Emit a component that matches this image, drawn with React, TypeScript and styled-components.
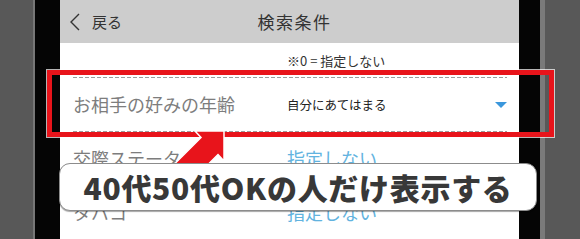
import styled, { createGlobalStyle } from "styled-components";

const GlobalStyle = createGlobalStyle`
  html, body {
    margin: 0;
    padding: 0;
    background: #585858;
  }
  body {
    font-family: "Noto Sans CJK JP", "Noto Sans", sans-serif;
  }
`;

const Stage = styled.div`
  position: relative;
  width: 580px;
  height: 239px;
  overflow: hidden;
  display: flex;
  background: #585858;
`;

const Bezel = styled.div`
  display: flex;
  margin-left: 33px;
  padding: 0 21px 0 25px;
  background: #050505;
  border-left: 2px solid #777;
  border-right: 5px solid #7a7a7a;
`;

const Screen = styled.div`
  width: 459px;
  display: flex;
  flex-direction: column;
  background: #fff;
`;

const Header = styled.header`
  height: 43px;
  flex-shrink: 0;
  display: grid;
  grid-template-columns: 1fr auto 1fr;
  align-items: center;
  padding: 0 9px;
  background: #cdcdcd;
  color: #333;
`;

const Back = styled.div`
  display: flex;
  align-items: center;
  gap: 12px;
  font-size: 15px;
`;

const Title = styled.div`
  font-size: 17px;
  letter-spacing: 1.5px;
  padding-left: 10px;
`;

const Note = styled.div`
  height: 34px;
  flex-shrink: 0;
  display: flex;
  align-items: center;
  padding-left: 227px;
  font-size: 13px;
  color: #333;
  white-space: pre;
`;

const List = styled.div`
  margin: 0 12px 0 13px;
`;

const Row = styled.div`
  box-sizing: border-box;
  height: 54px;
  display: grid;
  grid-template-columns: 214px 1fr auto;
  align-items: center;
  background: linear-gradient(to right, #9c9c9c 66%, transparent 0) top left / 6px 1px repeat-x;
  &:last-child {
    height: 53px;
  }
`;

const Label = styled.span`
  font-size: 18px;
  color: #7d7d7d;
`;

const Value = styled.span<{ $link?: boolean }>`
  font-size: ${(p) => (p.$link ? "18px" : "12.5px")};
  color: ${(p) => (p.$link ? "#62b3df" : "#222")};
`;

const Caret = styled.span`
  width: 0;
  height: 0;
  border-left: 6px solid transparent;
  border-right: 6px solid transparent;
  border-top: 6px solid #3b97dc;
  margin-top: 2px;
`;

const Highlight = styled.div`
  position: absolute;
  left: 47px;
  top: 70px;
  width: 507px;
  height: 67px;
  box-sizing: border-box;
  border: 5px solid #e8141b;
  box-shadow: 0 0 0 1px rgba(255, 255, 255, 0.7);
`;

const Pointer = styled.svg`
  position: absolute;
  left: 150px;
  top: 120px;
  width: 90px;
  height: 80px;
`;

const Banner = styled.div`
  position: absolute;
  left: 59px;
  top: 163px;
  width: 478px;
  height: 48px;
  box-sizing: border-box;
  display: flex;
  align-items: center;
  justify-content: center;
  background: #fff;
  border: 1px solid #8c8c8c;
  border-radius: 11px;
  box-shadow: 0 1px 1px rgba(0, 0, 0, 0.35);
  font-size: 30px;
  font-weight: 900;
  color: #383838;
  letter-spacing: 0.7px;
`;

const rows = [
  { label: "お相手の好みの年齢", value: "自分にあてはまる", link: false, caret: true },
  { label: "交際ステータス", value: "指定しない", link: true, caret: false },
  { label: "タバコ", value: "指定しない", link: true, caret: false },
];

export default function App() {
  return (
    <>
      <GlobalStyle />
      <Stage>
        <Bezel>
          <Screen>
            <Header>
              <Back>
                <svg width="11" height="18" viewBox="0 0 11 18">
                  <polyline points="10,1 2,9 10,17" fill="none" stroke="#333" strokeWidth="1.4" />
                </svg>
                戻る
              </Back>
              <Title>検索条件</Title>
              <span />
            </Header>
            <Note>※0 = 指定しない</Note>
            <List>
              {rows.map((r) => (
                <Row key={r.label}>
                  <Label>{r.label}</Label>
                  <Value $link={r.link}>{r.value}</Value>
                  {r.caret ? <Caret /> : <span />}
                </Row>
              ))}
            </List>
          </Screen>
        </Bezel>
        <Highlight />
        <Pointer viewBox="150 120 90 80">
          <polygon
            points="224,131 195,131 201,137.5 161,177.5 178,194.5 218,154.5 224,161"
            fill="#e8141b"
            stroke="#fff"
            strokeWidth="1.5"
          />
        </Pointer>
        <Banner>40代50代OKの人だけ表示する</Banner>
      </Stage>
    </>
  );
}
